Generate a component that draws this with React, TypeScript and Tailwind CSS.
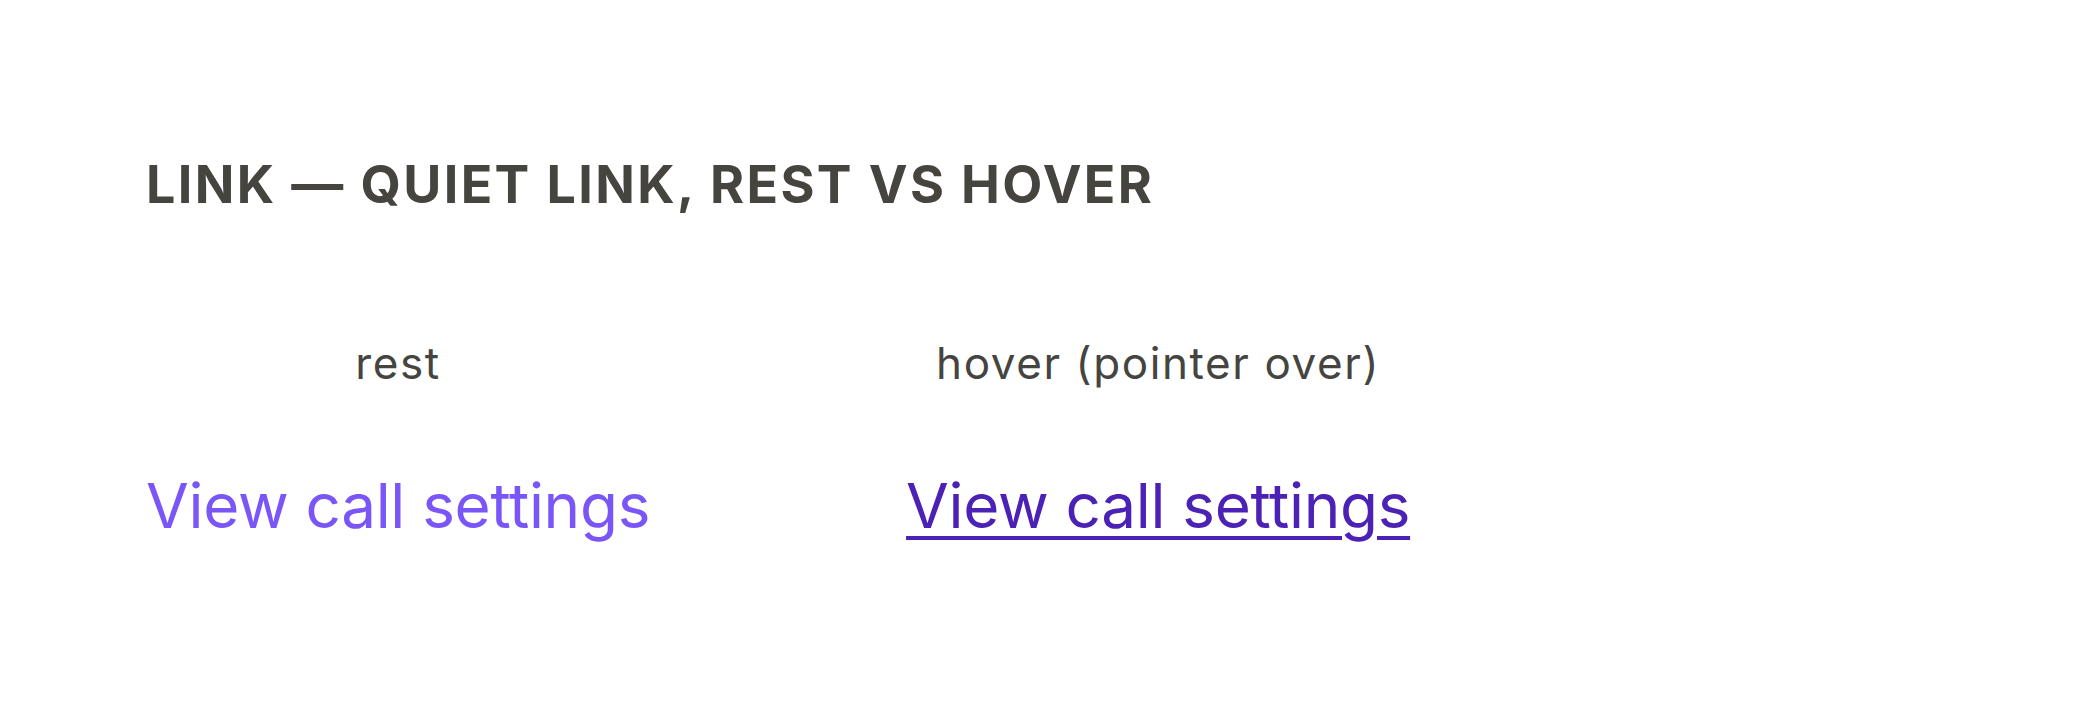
export default function App() {
  return (
    <div
      className="min-h-screen bg-white pl-[146px] pt-[159px]"
      style={{ fontFamily: "Inter, 'Noto Sans', sans-serif" }}
    >
      <h2 className="text-[52px] font-bold uppercase leading-none tracking-[0.046em] text-[#45443f]">
        Link — quiet link, rest vs hover
      </h2>

      <div className="mt-[130px] flex gap-[256px]">
        <div className="flex flex-col items-center">
          <span className="text-[44px] leading-none tracking-[0.036em] text-[#45443f]">rest</span>
          <a href="#" className="mt-[90px] text-[62px] leading-none tracking-[-0.005em] text-[#7a55f7] no-underline">
            View call settings
          </a>
        </div>
        <div className="flex flex-col items-center">
          <span className="text-[44px] leading-none tracking-[0.036em] text-[#45443f]">hover (pointer over)</span>
          <a
            href="#"
            className="mt-[90px] text-[62px] leading-none tracking-[-0.005em] text-[#4b22b5] underline decoration-[4px] underline-offset-[8px]"
          >
            View call settings
          </a>
        </div>
      </div>
    </div>
  );
}
